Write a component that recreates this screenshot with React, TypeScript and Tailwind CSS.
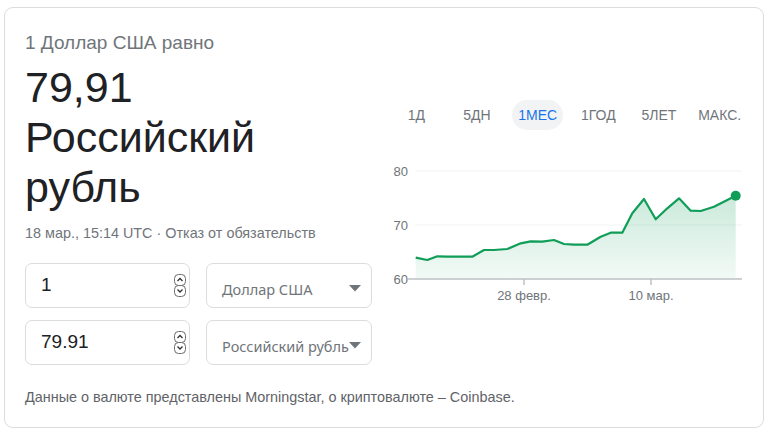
const line: [number, number][] = [
  [29.7, 97.7], [41.3, 100], [51.3, 96.3], [61.3, 96.7], [86.3, 96.7], [98, 90], [108, 90],
  [121.3, 89], [134.7, 83.3], [144.7, 81.3], [156.3, 81.7], [168, 80], [178, 84], [188, 84.7],
  [201.3, 84.7], [214.7, 76.7], [224.7, 72.7], [236.3, 72.7], [246.3, 53.3], [258, 39],
  [269.7, 59.3], [281.3, 48.3], [293, 38.3], [304.7, 50.7], [314.7, 51], [328, 46.7], [349.7, 35.7],
];

const tabs = ['1Д', '5ДН', '1МЕС', '1ГОД', '5ЛЕТ', 'МАКС.'];

function Spinner() {
  return (
    <svg width="12" height="23" viewBox="0 0 12 23" className="shrink-0">
      <rect x="0.5" y="0.5" width="11" height="11" rx="4" fill="#fff" stroke="#6b6b6b" />
      <rect x="0.5" y="11.5" width="11" height="11" rx="4" fill="#fff" stroke="#6b6b6b" />
      <path d="M3.5 7 L6 4.5 L8.5 7" fill="none" stroke="#333" strokeWidth="1.3" />
      <path d="M3.5 15.5 L6 18 L8.5 15.5" fill="none" stroke="#333" strokeWidth="1.3" />
    </svg>
  );
}

function NumberBox({ value }: { value: string }) {
  return (
    <div className="w-[165px] h-[45px] rounded-[7px] border border-[#dadce0] flex items-center justify-between pl-[15px] pr-[3px]">
      <span className="text-[19px] text-[#202124]">{value}</span>
      <Spinner />
    </div>
  );
}

function SelectBox({ label }: { label: string }) {
  return (
    <div className="relative w-[166px] h-[45px] rounded-[7px] border border-[#dadce0] flex items-center pl-[15px] pt-[8px] overflow-hidden">
      <span className="text-[14.5px] text-[#70757a] whitespace-nowrap" style={{ fontFamily: '"Noto Sans", sans-serif' }}>
        {label}
      </span>
      <svg width="12" height="7" viewBox="0 0 12 7" className="absolute right-[10px] top-[21px]">
        <path d="M0 0 H12 L6 6.5 Z" fill="#70757a" />
      </svg>
    </div>
  );
}

function Chart() {
  const pts = line.map(p => p.join(',')).join(' ');
  const area = `29.7,119 ${pts} 349.7,119`;
  return (
    <svg width="364" height="145" viewBox="0 0 364 145">
      <defs>
        <linearGradient id="fill" x1="0" y1="0" x2="0" y2="1">
          <stop offset="0" stopColor="#0f9d58" stopOpacity="0.22" />
          <stop offset="1" stopColor="#0f9d58" stopOpacity="0.05" />
        </linearGradient>
      </defs>
      <line x1="29" y1="11" x2="356" y2="11" stroke="#f1f3f4" strokeWidth="1" />
      <line x1="29" y1="65" x2="356" y2="65" stroke="#f1f3f4" strokeWidth="1" />
      <text x="22" y="16" textAnchor="end" fontSize="13" fill="#70757a" fontFamily="Liberation Sans, sans-serif">80</text>
      <text x="22" y="70" textAnchor="end" fontSize="13" fill="#70757a" fontFamily="Liberation Sans, sans-serif">70</text>
      <text x="22" y="124" textAnchor="end" fontSize="13" fill="#70757a" fontFamily="Liberation Sans, sans-serif">60</text>
      <polygon points={area} fill="url(#fill)" />
      <polyline points={pts} fill="none" stroke="#0f9d58" strokeWidth="2.2" strokeLinejoin="round" />
      <circle cx="349.7" cy="35.7" r="5" fill="#0f9d58" />
      <line x1="22" y1="119" x2="356" y2="119" stroke="#bdc1c6" strokeWidth="1.5" />
      <line x1="138" y1="119" x2="138" y2="125" stroke="#bdc1c6" strokeWidth="1.5" />
      <line x1="265" y1="119" x2="265" y2="125" stroke="#bdc1c6" strokeWidth="1.5" />
      <text x="138" y="140" textAnchor="middle" fontSize="13" fill="#70757a" fontFamily="Liberation Sans, sans-serif">28 февр.</text>
      <text x="265" y="140" textAnchor="middle" fontSize="13" fill="#70757a" fontFamily="Liberation Sans, sans-serif">10 мар.</text>
    </svg>
  );
}

export default function App() {
  return (
    <div className="w-[768px] h-[441px] bg-white px-[4px] pt-[7px]" style={{ fontFamily: '"Liberation Sans", Arial, sans-serif' }}>
      <div className="w-full h-[421px] rounded-[9px] border border-[#dadce0] pt-[23px] pl-[20px] pr-[11px]">
        <div className="flex gap-[14px]">
          {/* Left: rate + converter */}
          <div className="w-[347px]">
            <div className="text-[19px] leading-[24px] text-[#70757a]">1 Доллар США равно</div>
            <div className="mt-[7px] text-[43px] leading-[50px] text-[#202124]">
              <div>79,91</div>
              <div>Российский</div>
              <div>рубль</div>
            </div>
            <div className="mt-[11px] text-[14.4px] leading-[20px] text-[#70757a]">
              18 мар., 15:14 UTC · Отказ от обязательств
            </div>
            <div className="mt-[20px] flex flex-col gap-[12px]">
              <div className="flex gap-[16px]">
                <NumberBox value="1" />
                <SelectBox label="Доллар США" />
              </div>
              <div className="flex gap-[16px]">
                <NumberBox value="79.91" />
                <SelectBox label="Российский рубль" />
              </div>
            </div>
          </div>

          {/* Right: range tabs + chart */}
          <div className="flex-1">
            <div className="mt-[69px] grid grid-cols-6 w-[364px]">
              {tabs.map(t => (
                <div key={t} className="flex justify-center">
                  <span
                    className={
                      t === '1МЕС'
                        ? 'h-[30px] px-[6px] rounded-full bg-[#f1f3f4] text-[#1a73e8] text-[14px] flex items-center'
                        : 'h-[30px] text-[#70757a] text-[14px] flex items-center'
                    }
                  >
                    {t}
                  </span>
                </div>
              ))}
            </div>
            <div className="mt-[30px]">
              <Chart />
            </div>
          </div>
        </div>
        <div className="mt-[22px] text-[14.4px] leading-[20px] text-[#5f6368]">
          Данные о валюте представлены Morningstar, о криптовалюте – Coinbase.
        </div>
      </div>
    </div>
  );
}
